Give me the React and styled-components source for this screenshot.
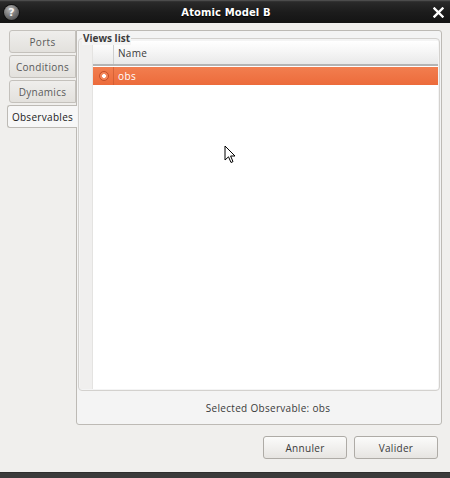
import React from 'react';
import styled, { createGlobalStyle } from 'styled-components';

const GlobalStyle = createGlobalStyle`
  html, body {
    margin: 0;
    padding: 0;
    background: #f0efed;
  }
  body {
    font-family: 'Open Sans', 'DejaVu Sans', sans-serif;
  }
`;

const Window = styled.div`
  position: relative;
  width: 450px;
  height: 478px;
  display: flex;
  flex-direction: column;
  background: #f0efed;
  overflow: hidden;
`;

const TitleBar = styled.div`
  height: 23px;
  flex: none;
  display: flex;
  align-items: center;
  justify-content: space-between;
  padding: 0 6px 0 4px;
  box-sizing: border-box;
  background: linear-gradient(#3a3a3a 0, #2a2a2a 1px, #1c1c1c 50%, #141414 100%);
  border-top: 1px solid #4c4c4c;
`;

const HelpButton = styled.span`
  width: 15px;
  height: 15px;
  border-radius: 50%;
  display: flex;
  align-items: center;
  justify-content: center;
  background: radial-gradient(circle at 40% 30%, #b8b8b8 0, #7a7a7a 45%, #3c3c3c 100%);
  box-shadow: 0 0 0 1px #111;
  color: #f4f4f4;
  font: bold 11px 'DejaVu Sans', sans-serif;
  line-height: 15px;
`;

const Title = styled.div`
  flex: 1;
  text-align: center;
  color: #ffffff;
  font: bold 10px 'DejaVu Sans', sans-serif;
  letter-spacing: 0.1px;
  text-shadow: 0 1px 1px #000;
`;

const Body = styled.div`
  flex: 1;
  display: flex;
  flex-direction: column;
  padding: 7px 8px 13px 7px;
  box-sizing: border-box;
`;

const TabArea = styled.div`
  display: flex;
  height: 395px;
`;

const TabColumn = styled.div`
  width: 70px;
  flex: none;
  display: flex;
  flex-direction: column;
  align-items: flex-end;
  gap: 2px;
  margin-right: -1px;
  z-index: 1;
`;

const Tab = styled.div`
  width: ${p => (p.$active ? '70px' : '67px')};
  height: 23px;
  box-sizing: border-box;
  display: flex;
  align-items: center;
  justify-content: center;
  border: 1px solid ${p => (p.$active ? '#bdbab5' : '#c4c1bc')};
  border-right: ${p => (p.$active ? 'none' : '1px solid #c4c1bc')};
  border-radius: 3px 0 0 3px;
  background: ${p => (p.$active ? '#f7f7f7' : 'linear-gradient(#efeeec, #e3e1dd)')};
  color: ${p => (p.$active ? '#1a1a1a' : '#5a5a5a')};
  font-size: 10px;
  letter-spacing: 0.3px;
  margin-right: ${p => (p.$active ? '0' : '1px')};
`;

const Panel = styled.div`
  flex: 1;
  display: flex;
  flex-direction: column;
  box-sizing: border-box;
  border: 1px solid #bdbab5;
  border-radius: 0 3px 3px 3px;
  background: #f4f4f4;
  padding: 0 1px;
`;

const GroupBox = styled.div`
  position: relative;
  margin-top: 7px;
  height: 353px;
  box-sizing: border-box;
  padding: 2px 1px 1px 1px;
  border: 1px solid #d3d1ce;
  border-radius: 4px;
  display: flex;
`;

const GroupTitle = styled.span`
  position: absolute;
  top: -8px;
  left: 3px;
  padding: 0 1px;
  background: #f4f4f4;
  font-weight: bold;
  font-size: 10px;
  line-height: 14px;
  color: #3c3c3c;
`;

const Table = styled.div`
  flex: 1;
  display: flex;
  background: #ffffff;
  border-radius: 0 3px 3px 3px;
`;

const RowHeaderColumn = styled.div`
  width: 12px;
  flex: none;
  background: #f0efee;
  border-right: 1px solid #e4e3e1;
`;

const TableMain = styled.div`
  flex: 1;
  display: flex;
  flex-direction: column;
  background: #ffffff;
`;

const HeaderRow = styled.div`
  height: 25px;
  box-sizing: border-box;
  display: flex;
  background: linear-gradient(#ffffff, #f7f7f7 40%, #e9e9e9);
  border-bottom: 2px solid #b4b4b4;
  margin-bottom: 1px;
`;

const Cell = styled.div`
  display: flex;
  align-items: center;
  box-sizing: border-box;
  ${p => (p.$narrow ? 'width: 21px; justify-content: center;' : 'flex: 1; padding-left: 4px;')}
  border-right: ${p => (p.$narrow ? `1px solid ${p.$line}` : 'none')};
`;

const HeaderText = styled.span`
  font-size: 10px;
  letter-spacing: 0.3px;
  color: #3a3a3a;
`;

const DataRow = styled.div`
  height: 18px;
  display: flex;
  background: ${p => (p.$selected ? 'linear-gradient(#f27e4f, #ec6b3b)' : 'transparent')};
  color: ${p => (p.$selected ? '#ffffff' : '#222')};
`;

const RowText = styled.span`
  font-size: 10px;
  letter-spacing: 0.4px;
`;

const Radio = styled.span`
  width: 10px;
  height: 10px;
  box-sizing: border-box;
  border-radius: 50%;
  border: 1px solid #c5502a;
  background: radial-gradient(circle, #ffffff 0 1.6px, #f48a60 2.2px, #f07a4c 100%);
  margin-left: 1px;
`;

const StatusBar = styled.div`
  flex: 1;
  display: flex;
  align-items: center;
  justify-content: center;
  font-size: 10px;
  letter-spacing: 0.3px;
  color: #3a3a3a;
  padding: 1px 0 0 18px;
`;

const ButtonRow = styled.div`
  display: flex;
  justify-content: flex-end;
  gap: 7px;
  margin-top: 11px;
  padding-right: 4px;
`;

const Button = styled.button`
  width: 84px;
  height: 23px;
  border: 1px solid #aeaba6;
  border-radius: 3px;
  background: linear-gradient(#fbfbfa, #f1f0ee 50%, #e6e4e1);
  font-family: 'Open Sans', sans-serif;
  font-size: 10px;
  letter-spacing: 0.3px;
  color: #3a3a3a;
  padding: 0;
`;

const BottomBar = styled.div`
  height: 6px;
  flex: none;
  background: #3b3b3b;
  border-top: 1px solid #2e2e2e;
`;

const Cursor = styled.svg`
  position: absolute;
  left: 224px;
  top: 145px;
`;

const tabs = ['Ports', 'Conditions', 'Dynamics', 'Observables'];

export default function App() {
  return (
    <>
      <GlobalStyle />
      <Window>
        <TitleBar>
          <HelpButton>?</HelpButton>
          <Title>Atomic Model B</Title>
          <svg width="11" height="11" viewBox="0 0 11 11">
            <path d="M1.5 1.5 L9.5 9.5 M9.5 1.5 L1.5 9.5" stroke="#ffffff" strokeWidth="2.4" strokeLinecap="square" />
          </svg>
        </TitleBar>
        <Body>
          <TabArea>
            <TabColumn>
              {tabs.map(t => (
                <Tab key={t} $active={t === 'Observables'}>{t}</Tab>
              ))}
            </TabColumn>
            <Panel>
              <GroupBox>
                <GroupTitle>Views list</GroupTitle>
                <Table>
                  <RowHeaderColumn />
                  <TableMain>
                    <HeaderRow>
                      <Cell $narrow $line="#cfcfcf" />
                      <Cell><HeaderText>Name</HeaderText></Cell>
                    </HeaderRow>
                    <DataRow $selected>
                      <Cell $narrow $line="rgba(190, 80, 40, 0.5)"><Radio /></Cell>
                      <Cell><RowText>obs</RowText></Cell>
                    </DataRow>
                  </TableMain>
                </Table>
              </GroupBox>
              <StatusBar>Selected Observable: obs</StatusBar>
            </Panel>
          </TabArea>
          <ButtonRow>
            <Button>Annuler</Button>
            <Button>Valider</Button>
          </ButtonRow>
        </Body>
        <BottomBar />
        <Cursor width="13" height="20" viewBox="0 0 13 20">
          <path d="M1 1 L1 15 L4.5 11.8 L7 17.5 L9 16.6 L6.6 11 L11 11 Z" fill="#ffffff" stroke="#000000" strokeWidth="1" strokeLinejoin="miter" />
        </Cursor>
      </Window>
    </>
  );
}
